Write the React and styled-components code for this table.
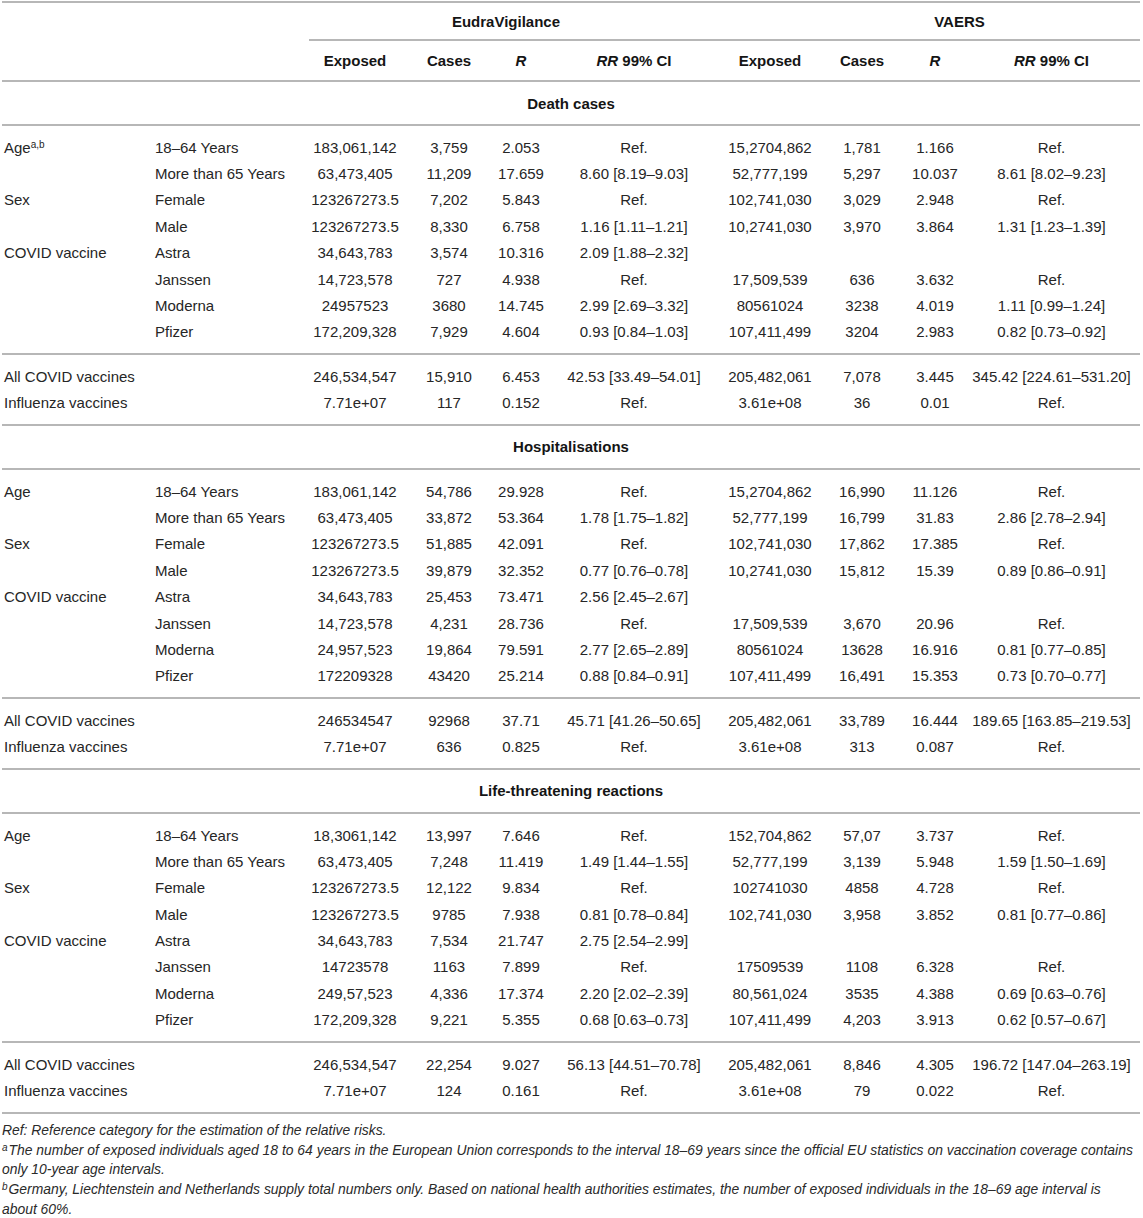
import React from 'react'
import styled, { createGlobalStyle } from 'styled-components';

const COLS = '151px 156px 92px 96px 48px 178px 94px 90px 56px 177px';
const LINE = '2px solid #b7b7b7';

const Global = createGlobalStyle`
    body {
        margin: 0;
        background: #fff;
        font-family: "Liberation Sans", Arial, sans-serif;
        color: #262626;
    }
`;

const Wrapper = styled.div`
    width: 1138px;
    padding: 1px 3px 0 2px;
`;

const Table = styled.div`
    border-top: ${LINE};
    font-size: 15px;
`;

const GroupRow = styled.div`
    display: grid;
    grid-template-columns: ${COLS};
`;

const GroupCell = styled.div`
    grid-column: ${(p) => p.$col};
    height: 36px;
    display: flex;
    align-items: center;
    justify-content: center;
    padding-left: ${(p) => (p.$shift > 0 ? p.$shift : 0)}px;
    padding-right: ${(p) => (p.$shift < 0 ? -p.$shift : 0)}px;
    border-bottom: ${LINE};
    font-weight: bold;
    color: #151515;
`;

const HeadRow = styled.div`
    display: grid;
    grid-template-columns: ${COLS};
    align-items: center;
    height: 39px;
    border-bottom: ${LINE};
`;

const HeadCell = styled.div`
    text-align: center;
    font-weight: bold;
    color: #151515;
    white-space: nowrap;
`;

const SectionTitle = styled.div`
    height: 42px;
    display: flex;
    align-items: center;
    justify-content: center;
    font-weight: bold;
    color: #151515;
    border-bottom: ${LINE};
`;

const Block = styled.div`
    padding: 8px 0;
    border-bottom: ${LINE};
`;

const Row = styled.div`
    display: grid;
    grid-template-columns: ${COLS};
    align-items: center;
    height: 26.4px;
`;

const Cell = styled.div`
    text-align: ${(p) => (p.$left ? 'left' : 'center')};
    padding-left: ${(p) => (p.$left ? '2px' : '0')};
    white-space: nowrap;
`;

const Sup = styled.sup`
    font-size: 10px;
    vertical-align: 5px;
    line-height: 0;
`;

const Notes = styled.div`
    width: 1141px;
    margin-top: 7px;
    font-size: 13.9px;
    font-style: italic;
    line-height: 19.8px;
    color: #2a2a2a;

    & p {
        margin: 0;
    }
`;

const NoteSup = styled.sup`
    font-size: 10px;
    vertical-align: 4px;
    line-height: 0;
    margin-right: 1px;
`;

const sections = [
    {
        title: 'Death cases',
        groups: [
            [
                [<>Age<Sup>a,b</Sup></>, '18–64 Years', '183,061,142', '3,759', '2.053', 'Ref.', '15,2704,862', '1,781', '1.166', 'Ref.'],
                ['', 'More than 65 Years', '63,473,405', '11,209', '17.659', '8.60 [8.19–9.03]', '52,777,199', '5,297', '10.037', '8.61 [8.02–9.23]'],
                ['Sex', 'Female', '123267273.5', '7,202', '5.843', 'Ref.', '102,741,030', '3,029', '2.948', 'Ref.'],
                ['', 'Male', '123267273.5', '8,330', '6.758', '1.16 [1.11–1.21]', '10,2741,030', '3,970', '3.864', '1.31 [1.23–1.39]'],
                ['COVID vaccine', 'Astra', '34,643,783', '3,574', '10.316', '2.09 [1.88–2.32]', '', '', '', ''],
                ['', 'Janssen', '14,723,578', '727', '4.938', 'Ref.', '17,509,539', '636', '3.632', 'Ref.'],
                ['', 'Moderna', '24957523', '3680', '14.745', '2.99 [2.69–3.32]', '80561024', '3238', '4.019', '1.11 [0.99–1.24]'],
                ['', 'Pfizer', '172,209,328', '7,929', '4.604', '0.93 [0.84–1.03]', '107,411,499', '3204', '2.983', '0.82 [0.73–0.92]'],
            ],
            [
                ['All COVID vaccines', '', '246,534,547', '15,910', '6.453', '42.53 [33.49–54.01]', '205,482,061', '7,078', '3.445', '345.42 [224.61–531.20]'],
                ['Influenza vaccines', '', '7.71e+07', '117', '0.152', 'Ref.', '3.61e+08', '36', '0.01', 'Ref.'],
            ],
        ],
    },
    {
        title: 'Hospitalisations',
        groups: [
            [
                ['Age', '18–64 Years', '183,061,142', '54,786', '29.928', 'Ref.', '15,2704,862', '16,990', '11.126', 'Ref.'],
                ['', 'More than 65 Years', '63,473,405', '33,872', '53.364', '1.78 [1.75–1.82]', '52,777,199', '16,799', '31.83', '2.86 [2.78–2.94]'],
                ['Sex', 'Female', '123267273.5', '51,885', '42.091', 'Ref.', '102,741,030', '17,862', '17.385', 'Ref.'],
                ['', 'Male', '123267273.5', '39,879', '32.352', '0.77 [0.76–0.78]', '10,2741,030', '15,812', '15.39', '0.89 [0.86–0.91]'],
                ['COVID vaccine', 'Astra', '34,643,783', '25,453', '73.471', '2.56 [2.45–2.67]', '', '', '', ''],
                ['', 'Janssen', '14,723,578', '4,231', '28.736', 'Ref.', '17,509,539', '3,670', '20.96', 'Ref.'],
                ['', 'Moderna', '24,957,523', '19,864', '79.591', '2.77 [2.65–2.89]', '80561024', '13628', '16.916', '0.81 [0.77–0.85]'],
                ['', 'Pfizer', '172209328', '43420', '25.214', '0.88 [0.84–0.91]', '107,411,499', '16,491', '15.353', '0.73 [0.70–0.77]'],
            ],
            [
                ['All COVID vaccines', '', '246534547', '92968', '37.71', '45.71 [41.26–50.65]', '205,482,061', '33,789', '16.444', '189.65 [163.85–219.53]'],
                ['Influenza vaccines', '', '7.71e+07', '636', '0.825', 'Ref.', '3.61e+08', '313', '0.087', 'Ref.'],
            ],
        ],
    },
    {
        title: 'Life-threatening reactions',
        groups: [
            [
                ['Age', '18–64 Years', '18,3061,142', '13,997', '7.646', 'Ref.', '152,704,862', '57,07', '3.737', 'Ref.'],
                ['', 'More than 65 Years', '63,473,405', '7,248', '11.419', '1.49 [1.44–1.55]', '52,777,199', '3,139', '5.948', '1.59 [1.50–1.69]'],
                ['Sex', 'Female', '123267273.5', '12,122', '9.834', 'Ref.', '102741030', '4858', '4.728', 'Ref.'],
                ['', 'Male', '123267273.5', '9785', '7.938', '0.81 [0.78–0.84]', '102,741,030', '3,958', '3.852', '0.81 [0.77–0.86]'],
                ['COVID vaccine', 'Astra', '34,643,783', '7,534', '21.747', '2.75 [2.54–2.99]', '', '', '', ''],
                ['', 'Janssen', '14723578', '1163', '7.899', 'Ref.', '17509539', '1108', '6.328', 'Ref.'],
                ['', 'Moderna', '249,57,523', '4,336', '17.374', '2.20 [2.02–2.39]', '80,561,024', '3535', '4.388', '0.69 [0.63–0.76]'],
                ['', 'Pfizer', '172,209,328', '9,221', '5.355', '0.68 [0.63–0.73]', '107,411,499', '4,203', '3.913', '0.62 [0.57–0.67]'],
            ],
            [
                ['All COVID vaccines', '', '246,534,547', '22,254', '9.027', '56.13 [44.51–70.78]', '205,482,061', '8,846', '4.305', '196.72 [147.04–263.19]'],
                ['Influenza vaccines', '', '7.71e+07', '124', '0.161', 'Ref.', '3.61e+08', '79', '0.022', 'Ref.'],
            ],
        ],
    },
];

const colHeads = ['Exposed', 'Cases', <i>R</i>, <><i>RR</i> 99% CI</>];

const App = () => {
    return (
        <>
            <Global />
            <Wrapper>
                <Table>
                    <GroupRow>
                        <GroupCell $col="3 / 7" $shift={-20}>EudraVigilance</GroupCell>
                        <GroupCell $col="7 / 11" $shift={56}>VAERS</GroupCell>
                    </GroupRow>

                    <HeadRow>
                        <span />
                        <span />
                        {[...colHeads, ...colHeads].map((h, i) => (
                            <HeadCell key={i}>{h}</HeadCell>
                        ))}
                    </HeadRow>

                    {sections.map((s) => (
                        <React.Fragment key={s.title}>
                            <SectionTitle>{s.title}</SectionTitle>
                            {s.groups.map((rows, gi) => (
                                <Block key={gi}>
                                    {rows.map((r, ri) => (
                                        <Row key={ri}>
                                            {r.map((c, ci) => (
                                                <Cell key={ci} $left={ci < 2}>{c}</Cell>
                                            ))}
                                        </Row>
                                    ))}
                                </Block>
                            ))}
                        </React.Fragment>
                    ))}
                </Table>

                <Notes>
                    <p>Ref: Reference category for the estimation of the relative risks.</p>
                    <p><NoteSup>a</NoteSup>The number of exposed individuals aged 18 to 64 years in the European Union corresponds to the interval 18–69 years since the official EU statistics on vaccination coverage contains<br />only 10-year age intervals.</p>
                    <p><NoteSup>b</NoteSup>Germany, Liechtenstein and Netherlands supply total numbers only. Based on national health authorities estimates, the number of exposed individuals in the 18–69 age interval is<br />about 60%.</p>
                </Notes>
            </Wrapper>
        </>
    )
}

export default App
